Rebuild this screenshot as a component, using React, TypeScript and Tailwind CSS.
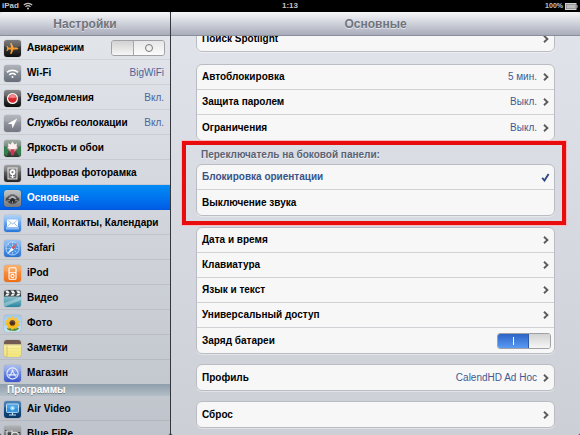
import clsx from "clsx";
import { useState } from "react";
import type { ReactNode } from "react";

type SidebarItem = {
  id: string;
  label: string;
  value?: string;
  tile: string;
  icon: ReactNode;
};

const settings: SidebarItem[] = [
  {
    id: "wifi",
    label: "Wi-Fi",
    value: "BigWiFi",
    tile: "from-[#a2a7b0] to-[#686e79]",
    icon: (
      <g fill="none" stroke="#fff" strokeWidth="1.6">
        <path d="M3 7.4a8 8 0 0 1 11 0" />
        <path d="M5.3 9.8a4.7 4.7 0 0 1 6.4 0" />
        <circle cx="8.5" cy="12" r="1" fill="#fff" stroke="none" />
      </g>
    ),
  },
  {
    id: "notifications",
    label: "Уведомления",
    value: "Вкл.",
    tile: "from-[#777] to-[#0c0c0c]",
    icon: (
      <g>
        <circle cx="8.5" cy="8.5" r="5.5" fill="#fff" />
        <circle cx="8.5" cy="8.5" r="4.3" fill="#d9262d" />
        <path d="M4.8 7.6a3.8 3.8 0 0 1 7.4 0q-3.7 1.4-7.4 0z" fill="#f0747a" />
      </g>
    ),
  },
  {
    id: "location",
    label: "Службы геолокации",
    value: "Вкл.",
    tile: "from-[#a9abb4] to-[#747781]",
    icon: <path d="M13.2 3.6 3.6 8.8l4.3.5.6 4.2z" fill="#fff" />,
  },
  {
    id: "wallpaper",
    label: "Яркость и обои",
    tile: "from-[#8fa095] to-[#26352b]",
    icon: (
      <g>
        <path d="M0 6l5 3-2 7-3-2zM17 6l-5 4 3 6 2-2z" fill="#35804a" />
        <path
          d="M8.5 9.8 3 8.2l1.4-1.4L4 3.2l2.6 1.2 1.9-2.8 1.9 2.8L13 3.2l-.4 3.6L14 8.2z"
          fill="#fbeeec"
        />
        <path d="M3.4 8.6q5.1 1.6 10.2 0l-3 3.2H6.4z" fill="#e58e9c" />
        <path d="M7 9.6h3l.6 2.400-1 3.500H7.400l-1-3.500z" fill="#cc3350" />
      </g>
    ),
  },
  {
    id: "frame",
    label: "Цифровая фоторамка",
    tile: "from-[#8f8f8f] to-[#242424]",
    icon: (
      <g fill="none" stroke="#e5e5e5">
        <rect x="4" y="3" width="9" height="11" fill="#707070" strokeWidth="1" />
        <circle cx="8.5" cy="7.2" r="2" stroke="#fff" strokeWidth="1.8" />
        <path d="M8.5 9v4M6.4 11.3l2.1 1 2.1-1" stroke="#fff" />
      </g>
    ),
  },
  {
    id: "general",
    label: "Основные",
    tile: "from-[#b9bbbd] to-[#77797c]",
    icon: (
      <g>
        {/* Gear seen from below: toothed rim, open arch, hub with spokes */}
        <path
          d="M1.5 10.5 2 8l1.300-.4.7-1.800 1.500-.2L6.800 4.200l1.200.4h1l1.200-.4 1.300 1.400 1.500.2.700 1.800L15 8l.5 2.500-2 .8-1.500 2-3.500.9-3.500-.9-1.500-2z"
          fill="#46484b"
        />
        <path d="M4.200 8.800Q8.500 3.400 12.800 8.800l-1.600.4Q8.500 6.600 5.800 9.200z" fill="#b4b6b9" />
        <path d="M6 10.400 8.500 8l2.500 2.400-1 2.200H7z" fill="#27282a" />
        <path d="M3.200 10.600h2.600M11.200 10.600h2.600M8.500 11v2.400" stroke="#909295" strokeWidth=".9" />
      </g>
    ),
  },
  {
    id: "mail",
    label: "Mail, Контакты, Календари",
    tile: "from-[#a0cbf8] to-[#2475da]",
    icon: (
      <g>
        <path d="M2 12q6.5-2.4 13 0v2.5H2z" fill="#bfe1fb" opacity=".6" />
        <rect x="3" y="4.5" width="11" height="7.5" rx=".6" fill="#fff" />
        <path
          d="m3.4 5 5.1 4 5.1-4M3.4 11.6l3.4-3.4m6.8 3.4-3.4-3.4"
          stroke="#8baed3"
          strokeWidth=".8"
          fill="none"
        />
      </g>
    ),
  },
  {
    id: "safari",
    label: "Safari",
    tile: "from-[#8ab9f2] to-[#276fd0]",
    icon: (
      <g>
        <circle cx="8.5" cy="8.5" r="6.6" fill="#4b91e3" stroke="#b6daf9" strokeWidth=".8" />
        <path
          d="M8.5 2v13M2 8.5h13M4 4l9 9"
          stroke="#bfe2fb"
          strokeWidth=".8"
          strokeDasharray="1.5 1"
        />
        <path d="m13.8 2.6-4.2 7L7.3 7.7z" fill="#d8424a" />
        <path d="m3 14.6 4.3-6.9 2.3 1.9z" fill="#f5f9fd" />
      </g>
    ),
  },
  {
    id: "ipod",
    label: "iPod",
    tile: "from-[#f9a351] to-[#ee6d10]",
    icon: (
      <g fill="none" stroke="#fff" strokeWidth="1.1">
        <rect x="5" y="2.8" width="7" height="11.4" rx="1" />
        <path d="M5 7.8h7" />
        <circle cx="8.5" cy="11" r="1.6" />
      </g>
    ),
  },
  {
    id: "video",
    label: "Видео",
    tile: "from-[#c4e4ec] to-[#23879f]",
    icon: (
      <g>
        <path d="M0 0h17v6.5H0z" fill="#1d2225" />
        <path
          d="M1 .6h3L5.7 3h-3zM6.5.6h3L11.2 3h-3zM12 .6h3L16.7 3h-3zM2.7 3.4h3L4 5.8H1zM8.2 3.4h3L9.5 5.8h-3zM13.700 3.4h3L15 5.8h-3z"
          fill="#eef3f4"
        />
        <path d="M0 13 17 7v3L0 17z" fill="#d9f0f4" opacity=".4" />
      </g>
    ),
  },
  {
    id: "photo",
    label: "Фото",
    tile: "from-[#8fc1ea] to-[#c5e3ef]",
    icon: (
      <g>
        <path
          d="M8.5 10v6M8.5 15q-3-3-5.5-1.5Q5 16 8.5 15q3.5-3.4 6-1.5-2.5 3-6 1.5"
          fill="#4f8b31"
          stroke="#4f8b31"
          strokeWidth=".8"
        />
        <path
          d="m8.5.8 1.6 2.6 2.8-1.2.1 3 3 .8-1.8 2.3 1.6 2.6-3 .6-.4 2.8-2.6-1.2-1.7 2.3-1.4-2.4-2.9.8.1-3-3-1 1.8-2.3L1 5.2l3-.4.3-2.9 2.6 1.4z"
          fill="#f9ba1e"
        />
        <circle cx="8.4" cy="7.8" r="2.9" fill="#5e3516" />
        <circle cx="8.2" cy="7.4" r="1.2" fill="#34200f" />
      </g>
    ),
  },
  {
    id: "notes",
    label: "Заметки",
    tile: "from-[#fbf4a5] to-[#f2e677]",
    icon: (
      <g>
        <path d="M0 0h17v4.6H0z" fill="#5b4037" />
        <path d="M0 4.6h17v1H0z" fill="#d7cb80" />
        <path d="M0 8.5h17M0 11.2h17M0 13.9h17" stroke="#e6da88" strokeWidth=".5" />
        <path d="M3 5.6V17" stroke="#d59e64" strokeWidth=".6" />
      </g>
    ),
  },
  {
    id: "store",
    label: "Магазин",
    tile: "from-[#9cb2ef] to-[#3a53cb]",
    icon: (
      <g fill="none" stroke="#e6edfc" strokeWidth="1.1">
        <circle cx="8.5" cy="8.5" r="5.6" />
        <path d="m9.2 4.8-3.8 6.8M7.8 4.8l3.8 6.8M4.2 9.9h8.6" />
      </g>
    ),
  },
];

const programs: SidebarItem[] = [
  {
    id: "airvideo",
    label: "Air Video",
    tile: "from-[#2a6fb2] to-[#083763]",
    icon: (
      <g>
        <rect x="2.5" y="3" width="12" height="8.4" rx=".8" fill="#2d93de" stroke="#c5e3f6" strokeWidth=".9" />
        <path d="M8.5 11.4v2M5 14h7" stroke="#c5e3f6" strokeWidth="1.2" />
        <circle cx="8.5" cy="7.2" r="2.3" fill="#7fd0fb" />
        <path d="m7.8 6 2 1.2-2 1.2z" fill="#fff" />
      </g>
    ),
  },
  {
    id: "bluefire",
    label: "Blue FiRe",
    tile: "from-[#a3a5a8] to-[#4a4c50]",
    icon: (
      <g fill="none" stroke="#e6e6e6" strokeWidth="1.1">
        <path d="M1 4.5h5l2 2h8" stroke="#2e3033" />
        <rect x="3" y="5" width="5" height="9" fill="#3c3e41" />
        <circle cx="11" cy="9.6" r="3.4" fill="#6b6d70" />
      </g>
    ),
  },
];

function Tile({ tile, children }: { tile: string; children: ReactNode }) {
  return (
    <span
      className={clsx(
        "size-[17px] shrink-0 overflow-hidden rounded-[3px] bg-linear-to-b shadow-[0_0_1px_rgba(0,0,0,0.5)]",
        tile,
      )}
    >
      <svg viewBox="0 0 17 17" className="size-full" aria-hidden="true">
        {children}
        <path d="M0 0h17v6q-8.5 3-17 0z" fill="#fff" opacity=".14" />
      </svg>
    </span>
  );
}

function Chevron() {
  return (
    <svg viewBox="0 0 6 8" className="h-2 w-1.5 shrink-0" aria-hidden="true">
      <path d="m1 .8 3.4 3.2L1 7.2" fill="none" stroke="#5c5c5c" strokeWidth="1.9" />
    </svg>
  );
}

function Switch({
  id,
  checked,
  onChange,
}: {
  id: string;
  checked: boolean;
  onChange: (next: boolean) => void;
}) {
  return (
    <label
      htmlFor={id}
      className="relative flex h-4 w-[54px] shrink-0 overflow-hidden rounded-[3px] border border-[#9fa1a5]"
    >
      <input
        id={id}
        type="checkbox"
        role="switch"
        checked={checked}
        onChange={(e) => onChange(e.target.checked)}
        className="absolute inset-0 size-full appearance-none"
      />
      {checked && (
        <span className="flex flex-1 items-center justify-center bg-linear-to-b from-[#2c63c6] to-[#5b9bf3]">
          <span className="h-2 w-px bg-white" />
        </span>
      )}
      <span
        className={clsx(
          "w-[22px] bg-linear-to-b from-[#d2d2d3] to-[#f6f6f6]",
          checked ? "border-l border-[#2f5ba8]" : "border-r border-[#a5a7aa]",
        )}
      />
      {!checked && (
        <span className="flex flex-1 items-center justify-center bg-linear-to-b from-[#e6e6e8] to-[#fbfbfb]">
          <span className="size-2 rounded-full border border-[#777]" />
        </span>
      )}
    </label>
  );
}

function SidebarRow({
  item,
  active,
  onSelect,
}: {
  item: SidebarItem;
  active: boolean;
  onSelect: () => void;
}) {
  return (
    <li>
      <button
        type="button"
        onClick={onSelect}
        className={clsx(
          "flex h-[25px] w-full items-center gap-1.5 border-b pt-0.5 pr-1.5 pl-1 text-left",
          active
            ? "border-[#0158dd] bg-linear-to-b from-[#058cf5] to-[#015de6] text-white"
            : "border-black/7 text-black",
        )}
      >
        <Tile tile={item.tile}>{item.icon}</Tile>
        <span className="flex-1 font-bold whitespace-nowrap">{item.label}</span>
        {item.value && <span className="text-[#4a659c]">{item.value}</span>}
      </button>
    </li>
  );
}

function Card({ children }: { children: ReactNode }) {
  return (
    <div className="divide-y divide-[#d0d1d4] rounded-[6px] border border-[#b9bcc2] bg-[#f7f7f7] shadow-[0_1px_0_rgba(255,255,255,0.4)]">
      {children}
    </div>
  );
}

function LinkRow({ label, value }: { label: string; value?: string }) {
  return (
    <button
      type="button"
      className="flex h-[25px] w-full items-center gap-1.5 px-[5px] text-left"
    >
      <span className="flex-1 font-bold">{label}</span>
      {value && <span className="text-[#3f5a91]">{value}</span>}
      <Chevron />
    </button>
  );
}

function PaneTitle({ children }: { children: ReactNode }) {
  return (
    <h2 className="relative z-10 flex h-6 shrink-0 items-center justify-center rounded-t-[4px] border-b border-[#8b8f9b] bg-linear-to-b from-[#f6f7f9] to-[#a9adbb] text-[12px] font-bold text-[#6f747d] [text-shadow:0_1px_0_rgba(255,255,255,0.6)]">
      {children}
    </h2>
  );
}

const sideSwitchOptions = ["Блокировка ориентации", "Выключение звука"];

export default function App() {
  const [section, setSection] = useState("general");
  const [airplane, setAirplane] = useState(false);
  const [battery, setBattery] = useState(true);
  const [sideSwitch, setSideSwitch] = useState(sideSwitchOptions[0]);

  return (
    <div className="flex h-screen flex-col overflow-hidden bg-black font-['Liberation_Sans',Arial,sans-serif] text-[10px] leading-3">
      {/* Status bar */}
      <header className="grid h-3 shrink-0 grid-cols-3 items-center px-0.5 text-[8px] font-bold text-[#c4c4c4]">
        <div className="flex items-center gap-1">
          <span>iPad</span>
          <svg viewBox="0 0 10 8" className="h-2 w-2.5" fill="none" stroke="#c4c4c4" aria-hidden="true">
            <path d="M.8 3a6 6 0 0 1 8.4 0M2.5 4.9a3.600 3.600 0 0 1 5 0" strokeWidth="1.2" />
            <circle cx="5" cy="6.5" r="1" fill="#c4c4c4" stroke="none" />
          </svg>
        </div>
        <span className="text-center">1:13</span>
        <div className="flex items-center justify-end gap-0.5">
          <span className="text-[7px]">100%</span>
          <svg viewBox="0 0 13 7" className="h-[7px] w-[13px]" aria-hidden="true">
            <rect x=".5" y=".5" width="10.5" height="6" fill="#777" stroke="#d0d0d0" />
            <rect x="1.5" y="1.5" width="8.5" height="4" fill="#bbb" />
            <path d="M11.5 2.2h1v2.6h-1z" fill="#d0d0d0" />
          </svg>
        </div>
      </header>

      <div className="flex min-h-0 flex-1 gap-px bg-[#33363c]">
        <nav className="flex w-[170px] shrink-0 flex-col overflow-hidden rounded-b-[2px] bg-linear-to-b from-[#e4e7ec] to-[#bfc3cb]">
          <PaneTitle>Настройки</PaneTitle>
          <ul className="-mt-px">
            <li className="flex h-[25px] items-center gap-1.5 border-b border-black/7 pt-0.5 pr-[5px] pl-1">
              <Tile tile="from-[#666] to-[#0e0e0e]">
                <path
                  d="M14.5 8.5q-.8-1-2-1H9.6L7.5 3H6.2l.9 4.5H4.6L3.4 6H2.5l.6 2.5-.6 2.5h.9l1.2-1.5h2.5L6.2 14h1.3l2.1-4.5h2.9q1.2 0 2-1z"
                  fill="#f79a2b"
                />
              </Tile>
              <label htmlFor="airplane" className="flex-1 font-bold">
                Авиарежим
              </label>
              <Switch id="airplane" checked={airplane} onChange={setAirplane} />
            </li>
            {settings.map((item) => (
              <SidebarRow
                key={item.id}
                item={item}
                active={section === item.id}
                onSelect={() => setSection(item.id)}
              />
            ))}
          </ul>
          <h3 className="-mt-px h-3 shrink-0 bg-linear-to-b from-[#8f9fab] to-[#b3bec7] pl-[7px] font-bold text-white [text-shadow:0_1px_0_rgba(0,0,0,0.3)]">
            Программы
          </h3>
          <ul>
            {programs.map((item) => (
              <SidebarRow
                key={item.id}
                item={item}
                active={section === item.id}
                onSelect={() => setSection(item.id)}
              />
            ))}
          </ul>
        </nav>

        <main className="flex min-w-0 flex-1 flex-col overflow-hidden rounded-b-[2px] bg-linear-to-b from-[#e1e5eb] to-[#cccfd5]">
          <PaneTitle>Основные</PaneTitle>
          {/* Scrolled a little, so the first card runs under the title */}
          <div className="-mt-[11px] flex flex-col px-[25px]">
            <Card>
              <LinkRow label="Поиск Spotlight" />
            </Card>

            <div className="mt-3">
              <Card>
                <LinkRow label="Автоблокировка" value="5 мин." />
                <LinkRow label="Защита паролем" value="Выкл." />
                <LinkRow label="Ограничения" value="Выкл." />
              </Card>
            </div>

            <div role="radiogroup" aria-labelledby="side-switch-title" className="relative">
              <h3
                id="side-switch-title"
                className="flex h-[23px] items-center pt-1 pl-[5px] font-bold text-[#596275] [text-shadow:0_1px_0_rgba(255,255,255,0.6)]"
              >
                Переключатель на боковой панели:
              </h3>
              <Card>
                {sideSwitchOptions.map((option) => (
                  <label
                    key={option}
                    className={clsx(
                      "flex h-[25px] items-center pr-1 pl-[5px] font-bold",
                      option === sideSwitch ? "text-[#3a5488]" : "text-black",
                    )}
                  >
                    <input
                      type="radio"
                      name="side-switch"
                      value={option}
                      checked={option === sideSwitch}
                      onChange={() => setSideSwitch(option)}
                      className="size-0 appearance-none"
                    />
                    <span className="flex-1">{option}</span>
                    {option === sideSwitch && (
                      <svg viewBox="0 0 9 9" className="size-[9px]" aria-hidden="true">
                        <path d="m1.2 4.8 2.3 2.7L7.6 1" fill="none" stroke="#2f4a80" strokeWidth="1.9" />
                      </svg>
                    )}
                  </label>
                ))}
              </Card>
              <div className="pointer-events-none absolute top-0 -right-[11px] -bottom-[9px] -left-3.5 border-4 border-[#e80c0c] ring-1 ring-[#f7b9bd]" />
            </div>

            <div className="mt-[11px] flex flex-col gap-2.5">
              <Card>
                <LinkRow label="Дата и время" />
                <LinkRow label="Клавиатура" />
                <LinkRow label="Язык и текст" />
                <LinkRow label="Универсальный доступ" />
                <div className="flex h-[25px] items-center pr-[3px] pl-[5px]">
                  <label htmlFor="battery" className="flex-1 font-bold">
                    Заряд батареи
                  </label>
                  <Switch id="battery" checked={battery} onChange={setBattery} />
                </div>
              </Card>
              <Card>
                <LinkRow label="Профиль" value="CalendHD Ad Hoc" />
              </Card>
              <Card>
                <LinkRow label="Сброс" />
              </Card>
            </div>
          </div>
        </main>
      </div>
    </div>
  );
}
